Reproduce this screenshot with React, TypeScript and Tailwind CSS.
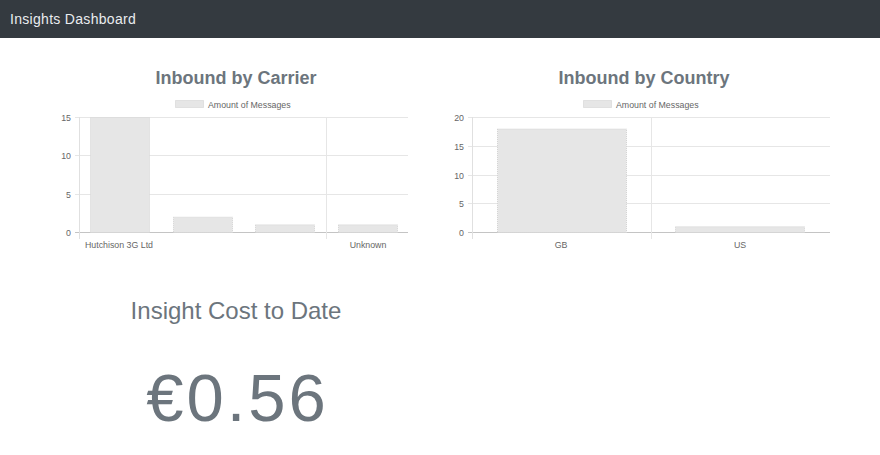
const font = { fontFamily: '"Liberation Sans", Arial, sans-serif' };

type Bar = { x: number; w: number; v: number };

type ChartProps = {
  legendX: number;
  ticks: number[];
  max: number;
  labelRight: number;
  axisX: number;
  endX: number;
  vLines: number[];
  bars: Bar[];
  labels: { x: number; text: string }[];
};

const TOP = 23;
const BOTTOM = 138;

function BarChart({ legendX, ticks, max, labelRight, axisX, endX, vLines, bars, labels }: ChartProps) {
  const yOf = (v: number) => BOTTOM - (v / max) * (BOTTOM - TOP);
  return (
    <svg width="408" height="160" className="block mt-[4px]" style={font}>
      <rect x={legendX + 0.5} y={6.5} width={28} height={7} fill="#e6e6e6" stroke="#cfcfcf" strokeDasharray="1 1" />
      <text x={legendX + 33} y={13.5} fontSize="8.8" fill="#666">
        Amount of Messages
      </text>
      {ticks.map((t) => (
        <g key={t}>
          <line
            x1={axisX - 4}
            x2={endX}
            y1={Math.round(yOf(t)) + 0.5}
            y2={Math.round(yOf(t)) + 0.5}
            stroke={t === 0 ? "#c4c4c4" : "#e6e6e6"}
          />
          <text x={labelRight} y={Math.round(yOf(t)) + 3.5} fontSize="8.8" fill="#666" textAnchor="end">
            {t}
          </text>
        </g>
      ))}
      <line x1={axisX + 0.5} x2={axisX + 0.5} y1={TOP} y2={145} stroke="#e0e0e0" />
      {vLines.map((x) => (
        <line key={x} x1={x + 0.5} x2={x + 0.5} y1={TOP} y2={145} stroke="#e6e6e6" />
      ))}
      {bars.map((b) => (
        <rect
          key={b.x}
          x={b.x + 0.5}
          y={yOf(b.v) + 0.5}
          width={b.w}
          height={BOTTOM - yOf(b.v)}
          fill="#e6e6e6"
          stroke="#d4d4d4"
          strokeDasharray="1 1"
        />
      ))}
      {labels.map((l) => (
        <text key={l.text} x={l.x} y={154} fontSize="8.8" fill="#666" textAnchor="middle">
          {l.text}
        </text>
      ))}
    </svg>
  );
}

export default function App() {
  return (
    <div className="min-h-[455px] bg-white" style={font}>
      <div className="h-[38px] bg-[#343a40] flex items-center px-[10px]">
        <span className="text-[14px] text-[#e9ecef] tracking-[0.3px]">Insights Dashboard</span>
      </div>
      <div className="grid grid-cols-[408px_408px] pl-[32px]">
        <div className="flex flex-col items-center">
          <h2 className="mt-[28px] text-[18px] leading-[24px] font-bold text-[#6c757d]">Inbound by Carrier</h2>
          <BarChart
            legendX={143}
            ticks={[0, 5, 10, 15]}
            max={15}
            labelRight={39}
            axisX={47}
            endX={376}
            vLines={[294]}
            bars={[
              { x: 58, w: 59, v: 15 },
              { x: 141, w: 59, v: 2 },
              { x: 223, w: 59, v: 1 },
              { x: 306, w: 59, v: 1 },
            ]}
            labels={[
              { x: 87, text: "Hutchison 3G Ltd" },
              { x: 336, text: "Unknown" },
            ]}
          />
          <h3 className="mt-[41px] text-[24px] leading-[32px] text-[#6c757d]">Insight Cost to Date</h3>
          <div className="mt-[37px] pl-[3px] text-[67px] leading-none text-[#6c757d] tracking-[3px]">€0.56</div>
        </div>
        <div className="flex flex-col items-center">
          <h2 className="mt-[28px] text-[18px] leading-[24px] font-bold text-[#6c757d]">Inbound by Country</h2>
          <BarChart
            legendX={143}
            ticks={[0, 5, 10, 15, 20]}
            max={20}
            labelRight={24}
            axisX={32}
            endX={390}
            vLines={[211]}
            bars={[
              { x: 57, w: 129, v: 18 },
              { x: 235, w: 129, v: 1 },
            ]}
            labels={[
              { x: 121, text: "GB" },
              { x: 300, text: "US" },
            ]}
          />
        </div>
      </div>
    </div>
  );
}
